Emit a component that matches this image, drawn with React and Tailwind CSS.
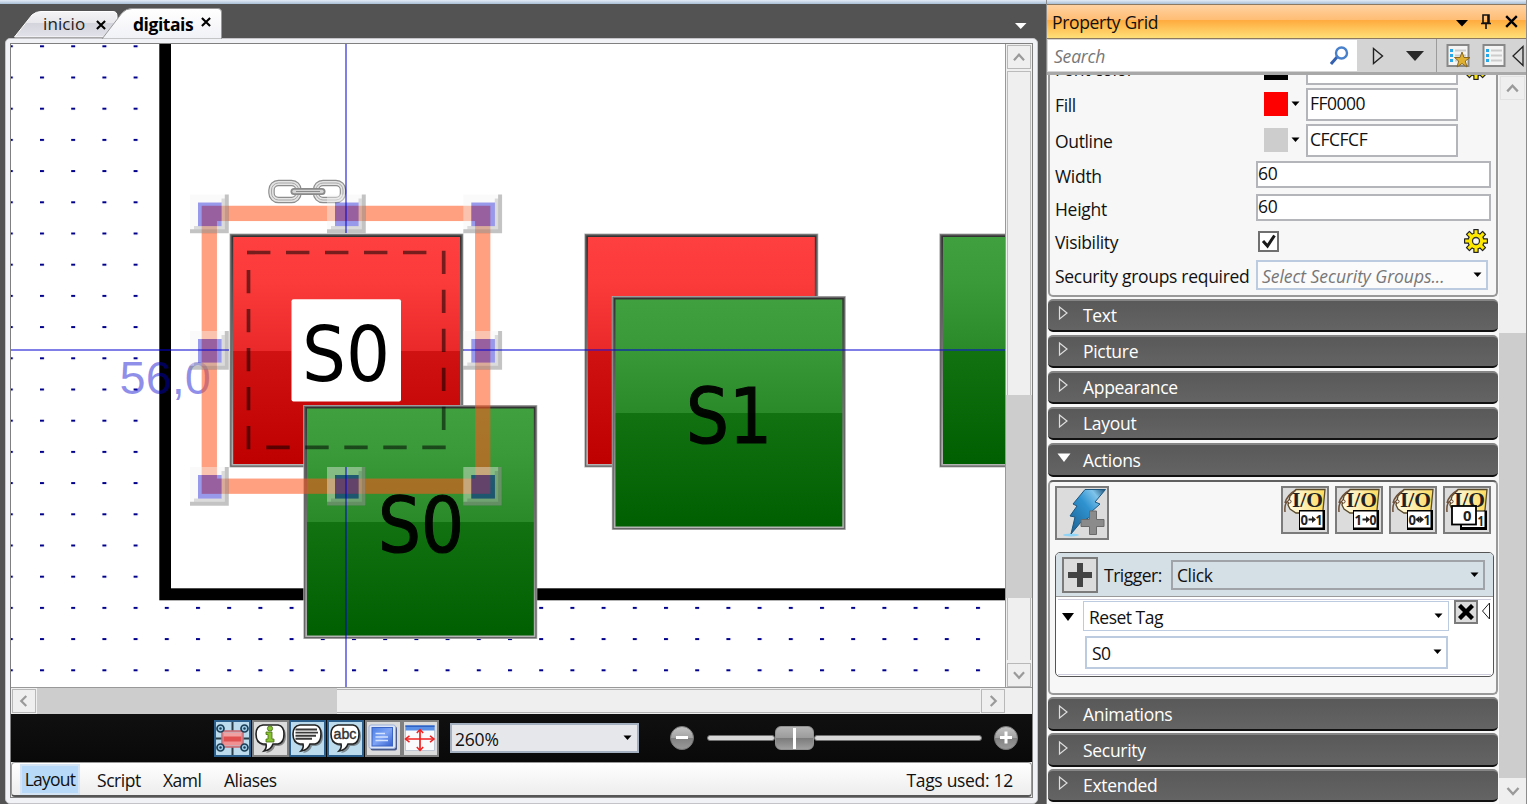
import React from "react";

const DOT = 31.2;

function Panel({ x, y, tone, label, lx }) {
  const s = 234;
  return (
    <g>
      <rect x={x} y={y} width={s} height={s} fill="#b4b4b4" />
      <rect x={x + 0.7} y={y + 0.7} width={s - 1.4} height={s - 1.4} fill="#666" />
      <rect x={x + 2} y={y + 2} width={s - 4} height={s - 4} fill="url(#edge)" />
      <rect x={x + 3.7} y={y + 3.5} width={s - 7.2} height={s - 7} fill={`url(#${tone})`} />
      {label && (
        <text x={lx} y={y + 146.500} fontSize="76" textLength="86" lengthAdjust="spacingAndGlyphs" stroke="#000" strokeWidth="1.2" opacity=".95">
          {label}
        </text>
      )}
    </g>
  );
}

function Handle({ x, y }) {
  return (
    <g>
      <path
        d={`M${x} ${y}h38.5v38.5h-38.5zM${x + 8} ${y + 8}v23.6h23.6v-23.6z`}
        fill="#f4f4f4"
        opacity=".42"
      />
      <path d={`M${x + 34.8} ${y}h4v38.8h-38.8v-4h34.8z`} fill="#000" opacity=".22" />
      <path d={`M${x + 31.5} ${y + 4}h3.3v30.8h-30.8v-3.2h27.5z`} fill="#000" opacity=".12" />
      <rect x={x + 8} y={y + 8} width="23.6" height="23.6" fill="#0000cf" opacity=".4" />
    </g>
  );
}

function Canvas() {
  const hs = [190, 327, 463.3];
  const vs = [194.5, 331, 467];
  return (
    <svg width="994" height="643" viewBox="11 44 994 643" className="block shrink-0 bg-white" fontFamily="'DejaVu Sans', sans-serif">
      <defs>
        <pattern id="dots" x="8.8" y="45.3" width={DOT} height={DOT} patternUnits="userSpaceOnUse">
          <rect x="0" y="0" width="4" height="2" fill="#00008b" />
        </pattern>
        <linearGradient id="edge" x1="0" y1="0" x2="0" y2="1">
          <stop offset="0" stopColor="#333" />
          <stop offset="1" stopColor="#b4b4b4" />
        </linearGradient>
        <linearGradient id="red" x1="0" y1="0" x2="0" y2="1">
          <stop offset="0" stopColor="#ff4040" />
          <stop offset=".2" stopColor="#fb3a3a" />
          <stop offset=".5" stopColor="#ea2a2a" />
          <stop offset=".5" stopColor="#d11212" />
          <stop offset="1" stopColor="#bf0000" />
        </linearGradient>
        <linearGradient id="green" x1="0" y1="0" x2="0" y2="1">
          <stop offset="0" stopColor="#40a040" />
          <stop offset=".2" stopColor="#3a9a3a" />
          <stop offset=".5" stopColor="#2a8a2a" />
          <stop offset=".5" stopColor="#127212" />
          <stop offset="1" stopColor="#005f00" />
        </linearGradient>
      </defs>
      <rect x="11" y="44" width="994" height="643" fill="url(#dots)" />
      <rect x="159.3" y="30" width="900" height="570.3" fill="#000" />
      <rect x="171" y="30" width="900" height="558.3" fill="#fff" />

      <Panel x={229.5} y={233.5} tone="red" />
      <rect x="291.5" y="299.3" width="109.5" height="102.3" rx="2" fill="#fff" />
      <text x="302" y="381" fontSize="77" textLength="88" lengthAdjust="spacingAndGlyphs">S0</text>
      <Panel x={303.3} y={405} tone="green" label="S0" lx={378} />
      <Panel x={584.3} y={233.5} tone="red" />
      <Panel x={611.8} y={296} tone="green" label="S1" lx={686} />
      <Panel x={939.3} y={233.5} tone="green" />

      <g fill="none" stroke="#000" strokeOpacity=".53" strokeWidth="3.7" strokeDasharray="23.4 15.6">
        <path d="M247 252.5h195" />
        <path d="M443.7 250.7v195" />
        <path d="M445.7 447.3h-195" />
        <path d="M248.5 449.3v-195" />
      </g>

      <g fontFamily="'Liberation Sans', sans-serif" fontSize="47" fill="#0000d0" fillOpacity=".44">
        <text x="119.5" y="393.5">56,0</text>
        <text x="347" y="718.6" fill="#333" fillOpacity=".8">166,0</text>
      </g>

      <g fill="none">
        <g stroke="#8d8d8d" strokeWidth="6.500">
          <rect x="271.500" y="183" width="27" height="17" rx="7" />
          <rect x="316" y="183" width="27" height="17" rx="7" />
        </g>
        <g stroke="#e4e4e4" strokeWidth="4.200">
          <rect x="271.500" y="183" width="27" height="17" rx="7" />
          <rect x="316" y="183" width="27" height="17" rx="7" />
        </g>
        <g stroke="#a8a8a8" strokeWidth="1">
          <rect x="271.500" y="183" width="27" height="17" rx="7" />
          <rect x="316" y="183" width="27" height="17" rx="7" />
        </g>
        <path d="M294 191.5h28" stroke="#8a8a8a" strokeWidth="7" strokeLinecap="round" />
        <path d="M294 191.5h28" stroke="#d4d4d4" strokeWidth="3.4" strokeLinecap="round" />
        <path d="M296 191.5h24" stroke="#8a8a8a" strokeWidth="1" />
      </g>

      <rect x="209.3" y="213.4" width="273.4" height="272.8" fill="none" stroke="#ff551c" strokeOpacity=".56" strokeWidth="15.3" />
      {vs.map((y, j) => hs.map((x, i) => (i === 1 && j === 1 ? null : <Handle key={`${x}-${y}`} x={x} y={y} />)))}
      <g fill="#0000d0" opacity=".5">
        <rect x="345" y="44" width="2" height="189" />
        <rect x="345" y="467" width="2" height="220" />
        <rect x="11" y="349" width="218" height="2" />
        <rect x="463" y="349" width="542" height="2" />
      </g>
    </svg>
  );
}

function Chevron({ d }) {
  return (
    <svg width="24" height="24" viewBox="0 0 24 24" className="block" fill="none" stroke="#9a9a9a" strokeWidth="2.4">
      <path d={d} />
    </svg>
  );
}
const UP = "M6.5 15.5L12 9.5L17.5 15.5";
const DOWN = "M6.5 9L12 15L17.5 9";
const LEFT = "M14.5 6.5L9 12L14.5 17.5";
const RIGHT = "M9.5 6.5L15 12L9.5 17.5";

function Caret({ className = "" }) {
  return (
    <svg width="9" height="6" viewBox="0 0 9 6" className={`shrink-0 ${className}`}>
      <path d="M.5 .5H8.5L4.5 5z" fill="#000" />
    </svg>
  );
}

function Cross({ w = 11, sw = 2.6, className = "" }) {
  return (
    <svg width={w} height={w} viewBox="0 0 11 11" className={`shrink-0 ${className}`} stroke="#000" strokeWidth={sw}>
      <path d="M1 1L10 10M10 1L1 10" />
    </svg>
  );
}

function Bubble({ children }) {
  return (
    <svg width="33" height="33" viewBox="0 0 33 33" className="block">
      <path d="M9 4H25Q31 5 31 13Q31 22 24 23H20Q18 29 11 30Q14 27 13 23H9Q3 22 3 13Q3 5 9 4z" fill="#444" opacity=".55" transform="translate(1 1)" />
      <path d="M9 3H24Q30 4 30 12Q30 21 24 22H19Q17 28 10 29Q13 26 12 22H9Q2 21 2 12Q2 4 9 3z" fill="#fff" stroke="#222" strokeWidth="1.6" />
      {children}
    </svg>
  );
}

const tools = [
  {
    on: true,
    icon: (
      <svg width="33" height="33" viewBox="0 0 33 33" className="block">
        <path d="M16.5 0V33M0 16.5H33" stroke="#2b3f48" strokeWidth="2" />
        <rect x="6" y="9" width="21" height="16" fill="#d0a8b0" stroke="#c86a72" strokeWidth="1.6" />
        <rect x="7.500" y="11" width="18" height="12" fill="#e05050" />
        <rect x="7.500" y="11" width="18" height="3.500" fill="#f0a0a0" />
        <rect x="7.500" y="19.500" width="18" height="3.500" fill="#f09090" />
        {[[4.500, 6.500], [28.500, 6.500], [4.500, 25.500], [28.500, 25.500]].map(([x, y]) => (
          <g key={`${x}-${y}`}>
            <circle cx={x} cy={y} r="3.5" fill="#9cc8e4" stroke="#1c3e55" strokeWidth="1.7" />
            <circle cx={x} cy={y} r="1.2" fill="#1c3e55" />
          </g>
        ))}
      </svg>
    ),
  },
  {
    on: false,
    icon: (
      <Bubble>
        <circle cx="16" cy="6.5" r="2.6" fill="#86c232" stroke="#476b15" strokeWidth=".8" />
        <path d="M12 10H18V17H20V20H12V17H14V12.500H12z" fill="#86c232" stroke="#476b15" strokeWidth=".8" />
      </Bubble>
    ),
  },
  {
    on: true,
    icon: (
      <Bubble>
        <path d="M4.500 7.500H26M4.500 10.600H27M4.500 13.700H25M4.500 16.800H21" stroke="#3a3a3a" strokeWidth="1.9" />
      </Bubble>
    ),
  },
  {
    on: true,
    icon: (
      <Bubble>
        <text x="4.5" y="17" fontSize="14" textLength="23" lengthAdjust="spacingAndGlyphs" fontFamily="'Liberation Sans', sans-serif" fill="#333" stroke="#333" strokeWidth=".4">abc</text>
      </Bubble>
    ),
  },
  {
    on: false,
    icon: (
      <svg width="33" height="33" viewBox="0 0 33 33" className="block">
        <defs>
          <linearGradient id="scr" x1="0" y1="0" x2="1" y2="1">
            <stop offset="0" stopColor="#4a7ee4" />
            <stop offset=".5" stopColor="#7fa4f4" />
            <stop offset="1" stopColor="#3460d0" />
          </linearGradient>
        </defs>
        <rect x="3.500" y="4.500" width="26.500" height="24" rx="2" fill="#4a5a88" />
        <rect x="2" y="3" width="26.500" height="23.500" rx="2" fill="#dce6f8" stroke="#9db0d8" strokeWidth="1" />
        <rect x="5" y="5.500" width="20.500" height="18.500" fill="url(#scr)" stroke="#3c64c4" strokeWidth="1" />
        <path d="M8.500 11.500H18M8.500 15H21M8.500 18.500H21" stroke="#d4e2ff" strokeWidth="1.3" />
      </svg>
    ),
  },
  {
    on: false,
    icon: (
      <svg width="33" height="33" viewBox="0 0 33 33" className="block">
        <rect x="1.500" y="3.500" width="29" height="25" fill="#f8fafc" stroke="#b4bccc" strokeWidth=".8" />
        <rect x="1.500" y="3.500" width="29" height="5" fill="#5a90e6" />
        <rect x="1.500" y="3.500" width="29" height="1.500" fill="#2f62c4" />
        <path d="M16 8V28M2 17H29" stroke="#f02020" strokeWidth="1.7" />
        <path d="M12.800 11L16 7.500L19.200 11M12.800 25L16 28.500L19.200 25M5.500 13.800L1.500 17L5.500 20.200M26 13.800L30 17L26 20.200" fill="none" stroke="#f02020" strokeWidth="1.5" />
      </svg>
    ),
  },
];

function RoundButton({ plus }) {
  return (
    <svg width="24" height="24" viewBox="0 0 24 24" className="block shrink-0">
      <defs>
        <linearGradient id="rnd" x1="0" y1="0" x2="0" y2="1">
          <stop offset="0" stopColor="#c4c4c4" />
          <stop offset=".48" stopColor="#a4a4a4" />
          <stop offset=".52" stopColor="#828282" />
          <stop offset="1" stopColor="#9a9a9a" />
        </linearGradient>
      </defs>
      <circle cx="12" cy="12" r="11.500" fill="url(#rnd)" stroke="#777" strokeWidth="1" />
      <path d={plus ? "M6 11.500H18M12 5.500V17.500" : "M6 11.500H18"} stroke="#fff" strokeWidth="3" />
    </svg>
  );
}

function TabStrip() {
  return (
    <div className="relative h-[34px] shrink-0">
      <svg width="1030" height="35" viewBox="0 0 1030 35" className="absolute left-0 top-0">
        <defs>
          <linearGradient id="t1" x1="0" y1="0" x2="0" y2="1">
            <stop offset="0" stopColor="#f4f4f6" />
            <stop offset=".45" stopColor="#e8e8ec" />
            <stop offset=".47" stopColor="#d4d5dc" />
            <stop offset="1" stopColor="#e2e3ea" />
          </linearGradient>
          <linearGradient id="t2" x1="0" y1="0" x2="0" y2="1">
            <stop offset="0" stopColor="#fff" />
            <stop offset="1" stopColor="#f0f1f6" />
          </linearGradient>
        </defs>
        <path d="M9.500 33L27 11Q31 7.500 36 7.500H108Q112 7.500 112 12V33z" fill="url(#t1)" stroke="#fff" />
        <path d="M97 35L117 9Q121 4.500 127 4.500H213Q216.500 4.500 216.500 8V35z" fill="url(#t2)" stroke="#999" />
        <path d="M1010 19H1021.500L1015.700 25z" fill="#fff" />
      </svg>
      <div className="relative flex items-center pt-[6px]">
        <span className="ml-[38px] w-[53px] text-[17px] leading-[28px] tracking-[0.1px] text-[#222]">inicio</span>
        <Cross w={10} sw={2.3} className="mt-0.5" />
        <span className="ml-[27px] w-[68px] text-[17.5px] leading-[26px] font-bold tracking-[-0.45px] text-black">digitais</span>
        <Cross w={10} sw={2.3} className="-mt-1" />
      </div>
    </div>
  );
}

function Editor() {
  return (
    <div className="flex h-[804px] w-[1034px] shrink-0 flex-col pl-[5px] pt-1">
      <TabStrip />
      <div className="flex h-[766px] w-[1033px] flex-col rounded-[5px] border border-[#c4c4c8] bg-[#f1f2f5] p-1">
        <div className="flex h-[755px] w-[1023px] flex-col overflow-hidden border border-[#808080] bg-[#efefef]">
          <div className="flex h-[643px]">
            <Canvas />
            <div className="flex h-full w-[27px] flex-col items-center border-l border-[#999] bg-[#efefef]">
              <div className="mt-px flex h-6 w-6 items-center justify-center border border-[#b8b8b8]"><Chevron d={UP} /></div>
              <div className="mt-0.5 h-[325px] w-6 border-x border-t border-[#bbb]" />
              <div className="h-[203px] w-[26px] bg-[#cdcdcd]" />
              <div className="h-[62px] w-6 border-x border-[#bbb]" />
              <div className="mt-[3px] flex h-6 w-6 items-center justify-center border border-[#b8b8b8]"><Chevron d={DOWN} /></div>
            </div>
          </div>
          <div className="flex h-[27px] items-center border-t border-[#999]">
            <div className="ml-px flex h-6 w-6 items-center justify-center border border-[#b8b8b8]"><Chevron d={LEFT} /></div>
            <div className="ml-px h-[26px] w-[300px] bg-[#cdcdcd]" />
            <div className="h-6 w-[643px] border-y border-[#b4b4b4]" />
            <div className="ml-px flex h-6 w-6 items-center justify-center border border-[#b8b8b8]"><Chevron d={RIGHT} /></div>
          </div>
          <div className="flex h-12 shrink-0 items-center bg-linear-to-b from-[#101010] to-[#090909]">
            <div className="ml-[203px] flex w-[226px] gap-[0.7px]">
              {tools.map((t, i) => (
                <div
                  key={i}
                  className={`flex h-[37px] w-[37px] shrink-0 items-center justify-center border-2 ${t.on ? "border-[#2c5f8c] bg-[#bcdcee]" : "border-[#808080] bg-[#dcdcdc]"}`}
                >
                  {t.icon}
                </div>
              ))}
            </div>
            <div className="ml-[10px] flex h-[30px] w-[189px] items-center justify-between border-2 border-[#a4b0c0] bg-[#e6e7eb] pl-[3px] pr-[5px] pt-0.5 text-[17.5px] tracking-[-0.2px] text-[#111]">
              <span>260%</span>
              <Caret className="-mt-[3px]" />
            </div>
            <div className="ml-[31px] flex items-center">
              <RoundButton />
              <div className="ml-[13px] flex w-[276px] items-center">
                <div className="h-[6px] w-[68px] rounded-full border border-[#707070] bg-[#d8d8d8]" />
                <div className="flex h-6 w-[39px] items-center justify-center rounded-[6px] border border-[#909090] bg-[linear-gradient(180deg,#b4b4b4_0%,#9c9c9c_48%,#7c7c7c_52%,#a0a0a0_100%)]">
                  <div className="h-[21px] w-[3px] bg-white" />
                </div>
                <div className="h-[6px] w-[168px] rounded-full border border-[#707070] bg-[#d8d8d8]" />
              </div>
              <div className="ml-[11px]"><RoundButton plus /></div>
            </div>
          </div>
          <div className="flex h-[35px] shrink-0 items-center rounded-[4px] border border-b-2 border-[#999] border-b-[#555] bg-linear-to-b from-white to-[#ededed] text-[17.5px] leading-[30px] text-[#111]">
            <span className="ml-2 w-[60px] border-2 border-[#d4e4f4] bg-[#b9d9f8] text-center leading-[27px] tracking-[-0.75px]">Layout</span>
            <span className="ml-[17px] w-[66px] pt-0.5 tracking-[-0.45px]">Script</span>
            <span className="w-[61px] pt-0.5 tracking-[-0.5px]">Xaml</span>
            <span className="pt-0.5 tracking-[-0.5px]">Aliases</span>
            <span className="ml-auto mr-[18px] pt-0.5 tracking-[-0.3px]">Tags used: 12</span>
          </div>
        </div>
      </div>
    </div>
  );
}

function Gear() {
  return (
    <svg width="24" height="24" viewBox="-12 -12 24 24" className="block shrink-0">
      <g fill="#222">
        {[0, 45, 90, 135].map((a) => (
          <rect key={a} x="-2.700" y="-12" width="5.400" height="24" rx=".6" transform={`rotate(${a})`} />
        ))}
        <circle r="8.600" />
      </g>
      <g fill="#ffe800">
        {[0, 45, 90, 135].map((a) => (
          <rect key={a} x="-1.500" y="-10.800" width="3" height="21.600" transform={`rotate(${a})`} />
        ))}
        <circle r="7.400" />
      </g>
      <circle r="3.500" fill="#f7f7f7" stroke="#333" strokeWidth="1.300" />
    </svg>
  );
}

function ColorRow({ label, color, value, gear }) {
  return (
    <div className="flex h-9 shrink-0 items-start">
      <span className="w-[209px] leading-[35px] tracking-[-0.35px]">{label}</span>
      <span className={`mt-1 h-6 w-6 ${color}`} />
      <Caret className="ml-[3px] mt-[13px]" />
      <span className="ml-[6px] h-[33px] w-[152px] border-2 border-[#b4b4bb] bg-white pl-[2px] leading-[26px] tracking-[-0.5px]">{value}</span>
      {gear && <span className="ml-1.5 mt-1"><Gear /></span>}
    </div>
  );
}

function NumberRow({ label, value }) {
  return (
    <div className="flex h-[33px] shrink-0 items-start">
      <span className="w-[201px] leading-[30px] tracking-[-0.3px]">{label}</span>
      <span className="h-[27px] w-[235px] border-2 border-[#b4b4bb] bg-white leading-[21px] tracking-[-0.3px]">{value}</span>
    </div>
  );
}

function Section({ title, open, tall }) {
  return (
    <div className={`flex shrink-0 items-center rounded-[5px] border-b-2 border-t-2 border-b-[#111] border-t-[#858585] bg-linear-to-b from-[#595959] to-[#646464] pl-[9px] text-[17.5px] text-white ${tall ? "h-[34px]" : "h-[33px] pb-[2px]"}`}>
      <svg width="14" height="16" viewBox="0 0 14 16" className="-mt-1 mr-3 shrink-0">
        {open ? <path d="M.5 3.500H13.500L7 12z" fill="#fff" /> : <path d="M2.500 2L10 8L2.500 14z" fill="none" stroke="#ddd" strokeWidth="1.200" />}
      </svg>
      <span className="leading-[28px] tracking-[-0.3px]">{title}</span>
    </div>
  );
}

function TagIcon({ label, stacked }) {
  return (
    <div className="h-12 w-12 shrink-0 border-2 border-[#7b7b7b] bg-[#dcdcdc]">
      <svg width="44" height="44" viewBox="0 0 44 44" className="block">
        <defs>
          <linearGradient id="tg" x1="0" y1="0" x2="1" y2="0">
            <stop offset="0" stopColor="#fffbe8" />
            <stop offset=".4" stopColor="#fdf0b8" />
            <stop offset="1" stopColor="#ffdc58" />
          </linearGradient>
        </defs>
        <path d="M13 1.500H42L40 22L38 25H13L7 21L5 17L7 8z" fill="url(#tg)" stroke="#5a4a2a" strokeWidth="1.300" />
        <path d="M13 2Q4 7 2 15M7 13Q1 13 2 24" fill="none" stroke="#6e5038" strokeWidth="1.500" />
        <circle cx="6.500" cy="13.500" r="1.600" fill="#fff" stroke="#5a3a20" />
        <text x="9" y="19" fontFamily="'Liberation Serif', serif" fontWeight="bold" fontSize="22" textLength="31" lengthAdjust="spacingAndGlyphs" fill="#222">I/O</text>
        {stacked ? (
          <g fontFamily="'Noto Sans', sans-serif" fontWeight="bold" fontSize="14.500" fill="#222">
            <rect x="15" y="22.500" width="27" height="19.500" fill="#000" />
            <rect x="17" y="23.500" width="22.500" height="15.500" fill="#fff" />
            <text x="32.500" y="37.500" textLength="6.500" lengthAdjust="spacingAndGlyphs">1</text>
            <rect x="7" y="18" width="24" height="18.500" fill="#fff" stroke="#000" strokeWidth="1.800" />
            <text x="18" y="33" textLength="8.500" lengthAdjust="spacingAndGlyphs">0</text>
          </g>
        ) : (
          <g fontFamily="'Noto Sans', sans-serif" fontWeight="bold" fontSize="15" fill="#222">
            <rect x="16" y="22" width="26" height="20" fill="#000" />
            <rect x="17" y="23.500" width="22.500" height="16" fill="#fff" />
            <text x="17.500" y="37" textLength="7.500" lengthAdjust="spacingAndGlyphs">{label[0]}</text>
            <text x="32.500" y="37" textLength="7" lengthAdjust="spacingAndGlyphs">{label[2]}</text>
            <path d="M25.500 31.500H31" stroke="#222" strokeWidth="2" />
            <path d="M29 28L33 31.500L29 35z" />
            {label[1] === "b" && <path d="M28.500 28L24.500 31.500L28.500 35z" />}
          </g>
        )}
      </svg>
    </div>
  );
}

function Actions() {
  return (
    <div className="mt-[3px] h-[215px] shrink-0 rounded-[5px] border-2 border-[#999] border-t-[#606060] bg-[#f7f7f7] pl-[5px] pt-1">
      <div className="flex h-[66px] items-start gap-1.5">
        <div className="mr-auto h-[54px] w-[54px] border-2 border-[#7b7b7b] bg-[#dcdcdc]">
          <svg width="50" height="50" viewBox="0 0 50 50" className="block">
            <defs>
              <linearGradient id="bolt" x1="1" y1="0" x2="0" y2="1">
                <stop offset="0" stopColor="#174a72" />
                <stop offset=".2" stopColor="#7fc4ea" />
                <stop offset=".45" stopColor="#2f93d0" />
                <stop offset="1" stopColor="#1c5f90" />
              </linearGradient>
            </defs>
            <ellipse cx="14" cy="47" rx="8" ry="1.500" fill="#8fd4f6" />
            <path d="M28 1.500H48.500L38 14L43 16L33 25L35 28L24 34L14 46L18 29L13 28L20 18L16 16z" fill="url(#bolt)" stroke="#1b5680" strokeWidth="1" />
            <path d="M32.500 23H39.500V31.500H47V38.500H39.500V46.500H32.500V38.500H24V31.500H32.500z" fill="#8b8b8b" stroke="#6a6a6a" />
          </svg>
        </div>
        <TagIcon label="0a1" />
        <TagIcon label="1a0" />
        <TagIcon label="0b1" />
        <div className="mr-[5px]"><TagIcon stacked /></div>
      </div>
      <div className="flex h-[125px] w-[439px] flex-col overflow-hidden rounded-[5px] border border-[#555] bg-white">
        <div className="flex h-[44px] shrink-0 items-center border-b border-[#999] bg-[#d5dfe6]">
          <div className="ml-1.5 flex h-9 w-9 items-center justify-center border-2 border-[#7b7b7b] bg-[#dcdcdc]">
            <svg width="26" height="26" viewBox="0 0 26 26"><path d="M13 1V25M1 13H25" stroke="#444" strokeWidth="6" /></svg>
          </div>
          <span className="ml-1.5 w-[67px] pt-0.5 tracking-[-0.5px]">Trigger:</span>
          <div className="flex h-[30px] w-[314px] items-center justify-between border-2 border-[#a0a3a8] pl-1 pr-1">
            <span className="pt-0.5 tracking-[-0.4px]">Click</span>
            <Caret />
          </div>
        </div>
        <div className="mx-0.5 mt-[2px] flex h-[76px] border-y border-[#ccd]">
          <svg width="12" height="8" viewBox="0 0 12 8" className="ml-1 mt-[13px] shrink-0"><path d="M0 0H12L6 8z" fill="#000" /></svg>
          <div className="ml-[9px] mt-px flex w-[366px] flex-col">
            <div className="flex h-[30px] items-center justify-between border border-[#bccbe0] pl-[5px] pr-[5px]">
              <span className="pt-[3px] tracking-[-0.5px]">Reset Tag</span>
              <Caret />
            </div>
            <div className="ml-0.5 mt-[5px] flex h-[33px] w-[363px] items-center justify-between border-2 border-[#bccbe0] pl-[5px] pr-1">
              <span className="pt-0.5 tracking-[-0.7px]">S0</span>
              <Caret className="-mt-0.5" />
            </div>
          </div>
          <div className="ml-[5px] flex h-6 w-6 shrink-0 items-center justify-center border-2 border-[#7b7b7b] bg-[#dcdcdc]">
            <Cross w={16} sw={3} />
          </div>
          <svg width="10" height="20" viewBox="0 0 10 20" className="ml-[3px] mt-px shrink-0"><path d="M8.500 2L1.500 10L8.500 18z" fill="#fff" stroke="#222" /></svg>
        </div>
      </div>
    </div>
  );
}

function ListIcon({ star }) {
  return (
    <svg width="25" height="26" viewBox="0 0 25 26" className="block shrink-0">
      <rect x="1.500" y="2" width="21" height="21" fill="#f4f4f4" stroke="#888" strokeWidth="2" />
      <path d="M4 7.500H7M4 12.500H7M4 17.500H7" stroke="#28a8e8" strokeWidth="3" />
      <path d="M9 7.500H20M9 12.500H20M9 17.500H20" stroke="#ccc" strokeWidth="1.800" />
      {star && <path d="M16 9L18 14.500H24L19.300 18L21 24L16 20.500L11 24L12.700 18L8.500 14.500H14z" fill="#e0b030" stroke="#8a6820" strokeWidth="1" />}
    </svg>
  );
}

function PropertyGrid() {
  return (
    <div className="ml-3 flex h-[804px] w-[481px] shrink-0 flex-col border-l border-r border-[#8c8c8c] bg-[#f7f7f7] text-[17.5px] text-[#111]">
      <div className="h-1 shrink-0 bg-linear-to-b from-[#e4ecf6] to-[#a9bfd6]" />
      <div className="flex h-[35px] shrink-0 items-center border-b border-t border-[#8c7860] bg-[linear-gradient(180deg,#ffd2a2_0%,#ffbd74_45%,#ffab3f_47%,#ffe078_100%)] pl-[5px]">
        <span className="mr-auto pt-0.5 tracking-[-0.33px]">Property Grid</span>
        <svg width="12" height="7" viewBox="0 0 12 7" className="mt-1"><path d="M0 0H12L6 6.500z" /></svg>
        <svg width="12" height="18" viewBox="0 0 12 18" className="ml-3" fill="none" stroke="#111" strokeWidth="1.600"><path d="M3 2H9V10H3zM8 2V10M1 10.500H11M6 11V16" /></svg>
        <Cross w={13} sw={2} className="ml-[13px] mr-[8px]" />
      </div>
      <div className="flex h-[36px] shrink-0 items-center border-b-[3px] border-[#a8a8a8] bg-[#d4d4d4]">
        <div className="ml-px flex h-[31px] w-[309px] items-center bg-white pl-[6px]">
          <span className="mr-auto pt-0.5 italic tracking-[-0.2px] text-[#777]">Search</span>
          <svg width="19" height="19" viewBox="0 0 19 19" className="mr-[8px]" fill="none"><path d="M1 18L7.500 10.500" stroke="#3560b0" strokeWidth="3" /><circle cx="11.500" cy="7" r="5.500" stroke="#4880cc" strokeWidth="2.400" /></svg>
        </div>
        <svg width="12" height="18" viewBox="0 0 12 18" className="ml-[15px]"><path d="M1.500 1.500L10.500 9L1.500 16.500z" fill="none" stroke="#222" strokeWidth="1.400" /></svg>
        <svg width="18" height="10" viewBox="0 0 18 10" className="ml-[22px]"><path d="M0 0H18L9 10z" fill="#2a2a2a" /></svg>
        <div className="ml-[12px] mr-[9px] h-[33px] w-px bg-[#9c9c9c]" />
        <ListIcon star />
        <div className="ml-[11px]"><ListIcon /></div>
        <svg width="13" height="22" viewBox="0 0 13 22" className="ml-[4px]"><path d="M12 1.500L2 11L12 20.500z" fill="none" stroke="#222" strokeWidth="1.300" /></svg>
      </div>
      <div className="flex h-[729px]">
        <div className="ml-px flex w-[450px] flex-col">
          <div className="flex h-[222px] shrink-0 flex-col overflow-hidden rounded-b-[5px] border-2 border-t-0 border-[#999] pl-[5px]">
            <div className="-mt-[23px] shrink-0"><ColorRow label="Font color" color="bg-black" value="" gear /></div>
            <ColorRow label="Fill" color="bg-[#ff0000]" value="FF0000" />
            <ColorRow label="Outline" color="bg-[#cdcdcd]" value="CFCFCF" />
            <div className="mt-px flex flex-col">
              <NumberRow label="Width" value="60" />
              <NumberRow label="Height" value="60" />
            </div>
            <div className="flex h-[33px] shrink-0 items-center">
              <span className="-mt-[3px] w-[203px] leading-[30px] tracking-[-0.35px]">Visibility</span>
              <span className="-mt-[5px] flex h-[21px] w-[21px] items-center justify-center border-2 border-[#707070] bg-white">
                <svg width="16" height="16" viewBox="0 0 16 16" fill="none" stroke="#1a1a1a" strokeWidth="3"><path d="M2 8L6.500 13L13.500 2.500" /></svg>
              </span>
              <span className="-mt-[6px] ml-[185px]"><Gear /></span>
            </div>
            <div className="flex h-[30px] shrink-0 items-center">
              <span className="w-[201px] whitespace-nowrap pt-[3px] tracking-[-0.3px]">Security groups required</span>
              <div className="flex h-[30px] w-[232px] items-center justify-between border-2 border-[#bccbe0] bg-[#fbfbfc] pl-1 pr-1">
                <span className="whitespace-nowrap pt-[3px] italic tracking-[-0.05px] text-[#777]">Select Security Groups...</span>
                <Caret />
              </div>
            </div>
          </div>
          <div className="mt-0.5 flex flex-col gap-[3px]">
            <Section title="Text" />
            <Section title="Picture" />
            <Section title="Appearance" />
            <Section title="Layout" />
            <Section title="Actions" open tall />
          </div>
          <Actions />
          <div className="mt-0.5 flex flex-col gap-[2px]">
            <Section title="Animations" tall />
            <Section title="Security" tall />
            <Section title="Extended" />
          </div>
        </div>
        <div className="ml-[1px] flex w-[27px] flex-col items-center bg-[#efefef]">
          <div className="mt-px flex h-6 w-[25px] items-center justify-center border border-[#e2e2e2]"><Chevron d={UP} /></div>
          <div className="mt-[233px] h-[445px] w-full bg-[#cdcdcd]" />
          <div className="mt-px flex h-6 w-[25px] items-center justify-center"><Chevron d={DOWN} /></div>
        </div>
      </div>
    </div>
  );
}

export default function App() {
  return (
    <div className="flex h-[804px] w-[1527px] flex-col overflow-hidden bg-[#535353] font-['Open_Sans','Noto_Sans',sans-serif]">
      <div className="h-1 shrink-0 bg-linear-to-b from-[#e4ecf6] to-[#a9bfd6]" />
      <div className="-mt-1 flex">
        <Editor />
        <PropertyGrid />
      </div>
    </div>
  );
}
